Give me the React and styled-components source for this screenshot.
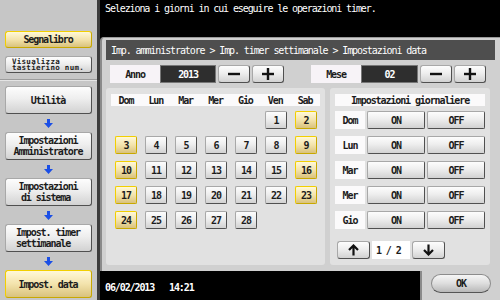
import React from 'react';
import styled, { createGlobalStyle, css } from 'styled-components';

const GlobalStyle = createGlobalStyle`
  html, body { margin: 0; padding: 0; background: #000; }
  body {
    font-family: "DejaVu Sans Mono", "Liberation Mono", monospace;
    font-size: 10px;
    letter-spacing: -1.1px;
    color: #1c1c1c;
  }
  * { box-sizing: border-box; }
`;

const grayBevel = css`
  background: linear-gradient(#fdfdfd, #eeeeee 45%, #d2d2d2);
  border: 1px solid #a8a8a8;
  border-right-color: #505050;
  border-bottom-color: #505050;
  border-radius: 3px;
`;

const yellowBevel = css`
  background: linear-gradient(#fff8d8, #f3e3ac 50%, #d9c27c);
  border: 1px solid #f2cf00;
  border-right-color: #c8a800;
  border-bottom-color: #c8a800;
  border-radius: 3px;
`;

const Screen = styled.div`
  width: 500px;
  height: 300px;
  display: flex;
  overflow: hidden;
  background: #000;
`;

/* ---------- left menu ---------- */
const Sidebar = styled.aside`
  width: 100px;
  flex: none;
  background: #c6c6c6;
  border-right: 3px solid #3c3c3c;
  display: flex;
  flex-direction: column;
  align-items: center;
  padding: 31px 4px 0 3px;
`;

const SideButton = styled.div`
  width: 87px;
  height: ${p => (p.$tall ? 28 : 17)}px;
  display: flex;
  align-items: center;
  justify-content: center;
  text-align: center;
  line-height: 11px;
  white-space: pre;
  font-weight: bold;
  ${p => (p.$active ? yellowBevel : grayBevel)}
`;

const TinyLabel = styled.span`
  font-size: 7.5px;
  letter-spacing: 0.3px;
  line-height: 6px;
  text-align: left;
`;

const Divider = styled.div`
  align-self: stretch;
  margin: 6px -4px 5px -3px;
  height: 2px;
  border-top: 1px solid #9c9c9c;
  border-bottom: 1px solid #e4e4e4;
`;

const FlowArrow = styled.div`
  height: 18px;
  display: flex;
  align-items: center;
  justify-content: center;
`;

/* ---------- right side ---------- */
const Main = styled.div`
  flex: 1;
  display: flex;
  flex-direction: column;
`;

const Message = styled.div`
  height: 37px;
  padding: 3px 0 0 5px;
  color: #fff;
  line-height: 12px;
`;

const Panel = styled.section`
  height: 234px;
  background: #d0d0d0;
  border-top: 1px solid #9a9a9a;
  border-left: 2px solid #8a8a8a;
  border-top-left-radius: 4px;
  padding: 2px 5px 0 4px;
  display: flex;
  flex-direction: column;
`;

const Breadcrumb = styled.div`
  height: 20px;
  background: #4e4e4e;
  color: #fff;
  padding-left: 5px;
  display: flex;
  align-items: center;
`;

const ControlRow = styled.div`
  display: flex;
  margin-top: 5px;
  padding-left: 4px;
  height: 18px;
`;

const Stepper = styled.div`
  display: flex;
  gap: 2px;
  margin-right: ${p => p.$gap || 0}px;
`;

const FieldLabel = styled.div`
  width: 50px;
  background: #f7f3f7;
  display: flex;
  align-items: center;
  justify-content: center;
  font-weight: bold;
  margin-right: -2px;
`;

const FieldValue = styled.div`
  width: ${p => p.$w}px;
  background: #2e2e2e;
  border: 1px solid #777;
  color: #fff;
  display: flex;
  align-items: center;
  justify-content: center;
  font-weight: bold;
`;

const StepButton = styled.div`
  width: 32px;
  display: flex;
  align-items: center;
  justify-content: center;
  ${grayBevel}
`;

const Columns = styled.div`
  display: flex;
  gap: 5px;
  margin-top: 5px;
  height: 177px;
`;

const SubPanel = styled.div`
  width: ${p => p.$w}px;
  background: #e1e1e1;
  border-radius: 3px;
  padding: 6px 5px 0;
`;

const HeadStrip = styled.div`
  height: 12px;
  background: #fbfafb;
  display: flex;
  align-items: center;
  justify-content: ${p => (p.$center ? 'center' : 'flex-start')};
  font-weight: bold;
`;

const CalGrid = styled.div`
  display: grid;
  grid-template-columns: repeat(7, 30px);
  grid-auto-rows: 18px;
  row-gap: 7px;
  margin-top: 5px;
  justify-items: center;
`;

const DayName = styled.span`
  width: 30px;
  text-align: center;
`;

const DayCell = styled.div`
  width: 22px;
  height: 18px;
  display: flex;
  align-items: center;
  justify-content: center;
  font-weight: bold;
  ${p => (p.$weekend ? yellowBevel : grayBevel)}
  border-radius: 2px;
`;

const DayRow = styled.div`
  display: flex;
  gap: 2px;
  height: 18px;
  margin-top: ${p => p.$first ? 5 : 7}px;
`;

const DayLabel = styled.div`
  width: 30px;
  background: #fbfafb;
  display: flex;
  align-items: center;
  justify-content: center;
  font-weight: bold;
`;

const ToggleButton = styled.div`
  width: 58px;
  display: flex;
  align-items: center;
  justify-content: center;
  font-weight: bold;
  ${grayBevel}
  border-radius: 2px;
`;

const Pager = styled.div`
  display: flex;
  gap: 2px;
  height: 18px;
  margin: 12px 0 0 2px;
`;

const PageButton = styled.div`
  width: 33px;
  display: flex;
  align-items: center;
  justify-content: center;
  ${grayBevel}
`;

const PageBox = styled.div`
  width: 38px;
  background: #fff;
  display: flex;
  align-items: center;
  padding-left: 4px;
  font-weight: bold;
  white-space: pre;
`;

const BottomRow = styled.div`
  flex: 1;
  display: flex;
`;

const Status = styled.div`
  flex: 1;
  color: #fff;
  white-space: pre;
  font-weight: bold;
  padding: 11px 0 0 5px;
  line-height: 12px;
`;

const OkTab = styled.div`
  width: 80px;
  background: #d0d0d0;
  border-left: 2px solid #8a8a8a;
  display: flex;
  justify-content: center;
  padding-top: 3px;
`;

const OkButton = styled.div`
  width: 60px;
  height: 19px;
  border-radius: 10px;
  background: linear-gradient(#f6f6f6, #dddddd 50%, #b8b8b8);
  border: 1px solid #8c8c8c;
  border-bottom-color: #555;
  display: flex;
  align-items: center;
  justify-content: center;
  font-weight: bold;
`;

const BlueArrow = () => (
  <svg width="9" height="9" viewBox="0 0 9 9">
    <path d="M3 0h3v4h3L4.5 9 0 4h3z" fill="#1b4fe6" />
  </svg>
);

const Minus = () => (
  <svg width="12" height="4" viewBox="0 0 12 4"><rect width="12" height="2.4" y="0.8" fill="#111" /></svg>
);
const Plus = () => (
  <svg width="12" height="12" viewBox="0 0 12 12">
    <rect width="12" height="2.4" y="4.8" fill="#111" />
    <rect width="2.4" height="12" x="4.8" fill="#111" />
  </svg>
);
const Arrow = ({ up }) => (
  <svg width="11" height="12" viewBox="0 0 11 12" style={{ transform: up ? 'none' : 'rotate(180deg)' }}>
    <path d="M5.5 1.5v10M1 6l4.5-4.5L10 6" stroke="#111" strokeWidth="2.2" fill="none" />
  </svg>
);

const dayNames = ['Dom', 'Lun', 'Mar', 'Mer', 'Gio', 'Ven', 'Sab'];
// febbraio 2013: il 1 cade di venerdì
const cells = [...Array(5).fill(null), ...Array.from({ length: 28 }, (_, i) => i + 1)];
const flow = ['Utilità', 'Impostazioni\nAmministratore', 'Impostazioni\ndi sistema ', 'Impost. timer\nsettimanale  '];

export default function App() {
  return (
    <>
      <GlobalStyle />
      <Screen>
        <Sidebar>
          <SideButton $active>Segnalibro</SideButton>
          <SideButton style={{ marginTop: 8 }}>
            <TinyLabel>{'Visualizza\ntastierino num.'}</TinyLabel>
          </SideButton>
          <Divider />
          {flow.map(label => (
            <React.Fragment key={label}>
              <SideButton $tall>{label}</SideButton>
              <FlowArrow><BlueArrow /></FlowArrow>
            </React.Fragment>
          ))}
          <SideButton $tall $active>Impost. data</SideButton>
        </Sidebar>

        <Main>
          <Message>Seleziona i giorni in cui eseguire le operazioni timer.</Message>
          <Panel>
            <Breadcrumb>Imp. amministratore &gt; Imp. timer settimanale &gt; Impostazioni data</Breadcrumb>
            <ControlRow>
              <Stepper $gap={27}>
                <FieldLabel>Anno</FieldLabel>
                <FieldValue $w={56}>2013</FieldValue>
                <StepButton><Minus /></StepButton>
                <StepButton><Plus /></StepButton>
              </Stepper>
              <Stepper>
                <FieldLabel>Mese</FieldLabel>
                <FieldValue $w={57}>02</FieldValue>
                <StepButton><Minus /></StepButton>
                <StepButton><Plus /></StepButton>
              </Stepper>
            </ControlRow>

            <Columns>
              <SubPanel $w={219}>
                <HeadStrip>
                  {dayNames.map(d => <DayName key={d}>{d}</DayName>)}
                </HeadStrip>
                <CalGrid>
                  {cells.map((n, i) =>
                    n === null ? <span key={i} /> : (
                      <DayCell key={i} $weekend={i % 7 === 0 || i % 7 === 6}>{n}</DayCell>
                    )
                  )}
                </CalGrid>
              </SubPanel>

              <SubPanel $w={160}>
                <HeadStrip $center>Impostazioni giornaliere</HeadStrip>
                {dayNames.slice(0, 5).map((d, i) => (
                  <DayRow key={d} $first={i === 0}>
                    <DayLabel>{d}</DayLabel>
                    <ToggleButton>ON</ToggleButton>
                    <ToggleButton>OFF</ToggleButton>
                  </DayRow>
                ))}
                <Pager>
                  <PageButton><Arrow up /></PageButton>
                  <PageBox>1 / 2</PageBox>
                  <PageButton><Arrow /></PageButton>
                </Pager>
              </SubPanel>
            </Columns>
          </Panel>
          <BottomRow>
            <Status>06/02/2013   14:21</Status>
            <OkTab><OkButton>OK</OkButton></OkTab>
          </BottomRow>
        </Main>
      </Screen>
    </>
  );
}
